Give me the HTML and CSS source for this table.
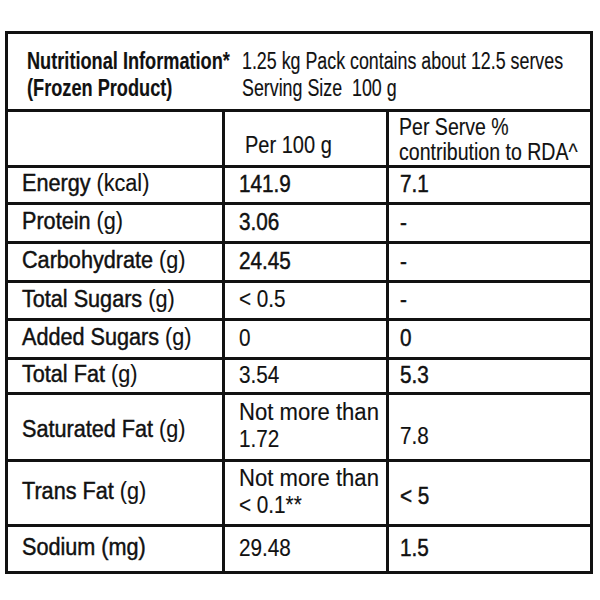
FILE: index.html
```html
<!DOCTYPE html>
<html lang="en">
<head>
<meta charset="utf-8">
<title>Nutritional Information</title>
<link rel="stylesheet" href="styles.css">
</head>
<body>
<div class="panel">
  <div class="cell head-l"><span class="t hd">Nutritional Information*<br>(Frozen Product)</span></div>
  <div class="cell head-r"><span class="t hr">1.25 kg Pack contains about 12.5 serves<br>Serving Size&nbsp; 100 g</span></div>

  <div class="cell c1 row"></div>
  <div class="cell c2 row sub-a"><span class="t sa">Per 100 g</span></div>
  <div class="cell c3 row sub-b"><span class="t sb">Per Serve %<br>contribution to RDA^</span></div>

  <div class="cell c1 row lbl"><span class="t tl"><span class="md">Energy</span> (kcal)</span></div>
  <div class="cell c2 row val"><span class="t tv md">141.9</span></div>
  <div class="cell c3 row val"><span class="t tv md">7.1</span></div>

  <div class="cell c1 row lbl"><span class="t tl"><span class="md">Protein</span> (g)</span></div>
  <div class="cell c2 row val"><span class="t tv md">3.06</span></div>
  <div class="cell c3 row val"><span class="t tv md">-</span></div>

  <div class="cell c1 row lbl"><span class="t tl"><span class="md">Carbohydrate</span> (g)</span></div>
  <div class="cell c2 row val"><span class="t tv md">24.45</span></div>
  <div class="cell c3 row val"><span class="t tv md">-</span></div>

  <div class="cell c1 row lbl"><span class="t tl"><span class="md">Total Sugars</span> (g)</span></div>
  <div class="cell c2 row val"><span class="t tv">&lt; 0.5</span></div>
  <div class="cell c3 row val"><span class="t tv md">-</span></div>

  <div class="cell c1 row lbl"><span class="t tl"><span class="md">Added Sugars</span> (g)</span></div>
  <div class="cell c2 row val"><span class="t tv">0</span></div>
  <div class="cell c3 row val"><span class="t tv md">0</span></div>

  <div class="cell c1 row lbl"><span class="t tl"><span class="md">Total Fat</span> (g)</span></div>
  <div class="cell c2 row val"><span class="t tv">3.54</span></div>
  <div class="cell c3 row val"><span class="t tv md">5.3</span></div>

  <div class="cell c1 row lbl lbl-low"><span class="t tl"><span class="md">Saturated Fat</span> (g)</span></div>
  <div class="cell c2 row val two"><span class="t tv tw">Not more than</span><span class="t tv">1.72</span></div>
  <div class="cell c3 row val low"><span class="t tv">7.8</span></div>

  <div class="cell c1 row lbl"><span class="t tl"><span class="md">Trans Fat</span> (g)</span></div>
  <div class="cell c2 row val two"><span class="t tv tw">Not more than</span><span class="t tv">&lt; 0.1**</span></div>
  <div class="cell c3 row val low2"><span class="t tv md">&lt; 5</span></div>

  <div class="cell c1 row lbl"><span class="t tl md">Sodium (mg)</span></div>
  <div class="cell c2 row val"><span class="t tv">29.48</span></div>
  <div class="cell c3 row val"><span class="t tv md">1.5</span></div>
</div>
</body>
</html>
```

FILE: styles.css
```css
html, body {
  margin: 0;
  padding: 0;
  background: #ffffff;
  overflow: hidden;
}

body {
  font-family: "Liberation Sans", Arial, sans-serif;
  color: #111111;
  font-size: 23px;
}

.panel {
  box-sizing: border-box;
  margin: 31px 0 0 5px;
  width: 588px;
  height: 543px;
  border: 3px solid #111111;
  display: grid;
  grid-template-columns: 214px 164px 204px;
  grid-template-rows: 75px 56px 37px 39px 39px 38px 39px 35px 67px 65px 47px;
}

.cell {
  box-sizing: border-box;
  white-space: nowrap;
  overflow: hidden;
  min-width: 0;
}

/* condensed lettering */
.t {
  display: inline-block;
  transform-origin: 0 50%;
  -webkit-text-stroke: 0.15px #111111;
}

.t .md,
.t.md {
  -webkit-text-stroke: 0.45px #111111;
}

.hd {
  font-weight: bold;
  line-height: 27px;
  transform: scaleX(0.79);
}

.hr {
  line-height: 27px;
  transform: scaleX(0.775);
}

.sa {
  line-height: 25px;
  transform: scaleX(0.87);
}

.sb {
  line-height: 25px;
  transform: scaleX(0.85);
}

.tl {
  transform: scaleX(0.94);
}

.tv {
  line-height: 27px;
  transform: scaleX(0.9);
}

.tv.tw {
  transform: scaleX(0.96);
}

.head-l {
  padding: 14px 0 0 19px;
  overflow: visible;
  position: relative;
  z-index: 1;
}

.head-r {
  grid-column: 2 / 4;
  padding: 14px 0 0 20px;
}

.row {
  border-top: 3px solid #111111;
}

.c2, .c3 {
  border-left: 3px solid #111111;
}

.sub-a {
  padding: 20px 0 0 20px;
}

.sub-b {
  padding: 3px 0 0 10px;
}

.lbl {
  display: flex;
  align-items: center;
  padding: 0 0 3px 14px;
}

.lbl-low {
  padding: 5px 0 0 14px;
}

.val {
  display: flex;
  align-items: center;
  padding-bottom: 2px;
}

.c2.val {
  padding-left: 14px;
}

.c3.val {
  padding-left: 11px;
}

.two {
  flex-direction: column;
  align-items: flex-start;
  justify-content: center;
  padding-bottom: 3px;
}

.low {
  padding: 18px 0 0 11px;
}

.low2 {
  padding: 6px 0 0 11px;
}
```
